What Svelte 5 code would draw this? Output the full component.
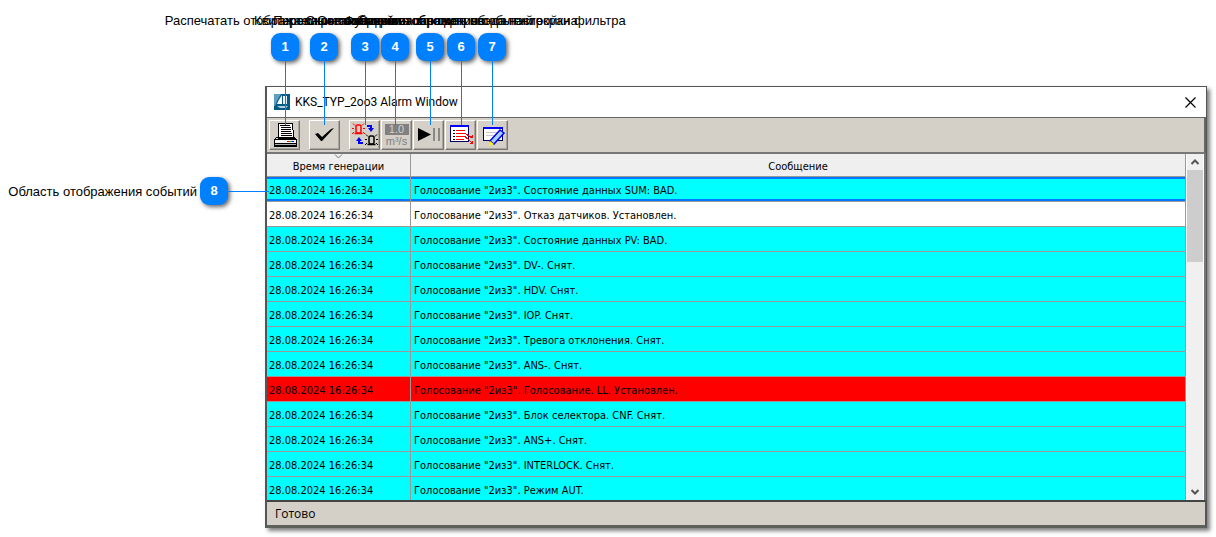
<script>
  const callouts = [
    { id: 1, x: 285, text: "Распечатать отображаемые сообщения" },
    { id: 2, x: 324, text: "Квитирование событий" },
    { id: 3, x: 365, text: "Переключение режима списка" },
    { id: 4, x: 395, text: "Скрыть значения параметров" },
    { id: 5, x: 430, text: "Остановить/возобновить обновление" },
    { id: 6, x: 461, text: "Функция отображения событий экрана" },
    { id: 7, x: 492, text: "Открыть окно для ввода настройки фильтра" },
  ];

  const time = "28.08.2024 16:26:34";

  const events = [
    { text: "Состояние данных SUM: BAD.", state: "selected" },
    { text: "Отказ датчиков. Установлен.", state: "plain" },
    { text: "Состояние данных PV: BAD." },
    { text: "DV-. Снят." },
    { text: "HDV. Снят." },
    { text: "IOP. Снят." },
    { text: "Тревога отклонения. Снят." },
    { text: "ANS-. Снят." },
    { text: "Голосование. LL. Установлен.", state: "alarm" },
    { text: "Блок селектора. CNF. Снят." },
    { text: "ANS+. Снят." },
    { text: "INTERLOCK. Снят." },
    { text: "Режим AUT." },
  ];
</script>

<main class="stage">
  <section class="window">
    <header class="titlebar">
      <svg class="logo" width="16" height="16" viewBox="0 0 16 16">
        <rect width="16" height="16" fill="#075985" />
        <path d="M0 0H7L3 7L1 12H0Z" fill="#5c9fc0" />
        <path d="M8 1V10H3C4 7 6 4 8 1Z" fill="#fff" />
        <path d="M9 2H13V10H9Z" fill="#e8f3f8" />
        <path d="M3 12H14L12 14H6Z" fill="#a9cfe0" />
      </svg>
      <h1>KKS_TYP_2oo3 Alarm Window</h1>
      <button class="close" aria-label="Закрыть">
        <svg width="11" height="11" viewBox="0 0 11 11">
          <path d="M0.5 0.5L10.5 10.5M10.5 0.5L0.5 10.5" stroke="#000" stroke-width="1.2" />
        </svg>
      </button>
    </header>

    <div class="toolbar">
      <button class="tool wide" aria-label="Печать">
        <svg width="29" height="28" viewBox="1 1 29 28" shape-rendering="crispEdges">
          <path d="M9 3H23L25 17H9Z" fill="#fff" stroke="#000" />
          <path d="M11 5.5H21M12 7.5H22M12 9.5H22M12 11.5H22M12 13.5H23M12 15.5H23" stroke="#000" />
          <path d="M8 17L5 20V25H27V20L25 17V18H9Z" fill="#ddd" stroke="#000" />
          <rect x="5.5" y="19.5" width="22" height="4" fill="#f4f4f4" stroke="#000" />
          <path d="M6 24H27V25H6Z" fill="#aaa" />
          <path d="M5 25.5H28" stroke="#000" stroke-width="2" />
          <path d="M18 21.5H20" stroke="red" />
          <path d="M20 21.5H23" stroke="#00b000" />
          <path d="M23 21.5H25" stroke="#00f" />
        </svg>
      </button>
      <button class="tool wide" aria-label="Квитировать">
        <svg width="29" height="28" viewBox="1 1 29 28">
          <path d="M6 14L9 13L13 17L22 9L25 8L13 21H12Z" fill="#000" />
        </svg>
      </button>
      <button class="tool" aria-label="Переключить">
        <svg width="29" height="28" viewBox="1 1 29 28">
          <g fill="none" stroke="red">
            <rect x="7" y="5" width="5" height="8" rx="1.5" stroke-width="1.5" />
            <path d="M5.5 13.5H13.5" stroke-width="1.5" />
            <path d="M4 3.5L6 5.5M15 3.5L13 5.5M3 8.5H5M14 8.5H16M3 14L5 12M16 14L14 12" />
          </g>
          <g fill="none" stroke="#000">
            <rect x="20" y="16" width="5" height="8" rx="1.5" stroke-width="1.5" />
            <path d="M18.5 24.5H26.5" stroke-width="1.5" />
            <path d="M17 14.5L19 16.5M28 14.5L26 16.5M16 19.5H18M27 19.5H29M16 25L18 23M29 25L27 23" />
          </g>
          <path d="M18 5H23V8H25L22 12L19 8H21V7H18Z" fill="#00f" />
          <path d="M14 24H9V21H7L10 17L13 21H11V22H14Z" fill="#00f" />
        </svg>
      </button>
      <button class="tool" aria-label="Единицы измерения">
        <span class="units"><b>1.0</b><i>m³/s</i></span>
      </button>
      <button class="tool" aria-label="Пауза">
        <svg width="29" height="28" viewBox="1 1 29 28">
          <path d="M5 8L18 14.5L5 21Z" fill="#000" />
          <path d="M20 8H22V21H20ZM25 8H27V21H25Z" fill="#888" />
        </svg>
      </button>
      <button class="tool" aria-label="Вывод событий">
        <svg width="29" height="28" viewBox="1 1 29 28" shape-rendering="crispEdges">
          <rect x="5.5" y="6.5" width="18" height="15" fill="#fff" stroke="#000060" />
          <path d="M5 6H24" stroke="#00f" stroke-width="2" />
          <path d="M8 10.5H10M8 13.5H10M8 16.5H10M8 19.5H10" stroke="#000" />
          <path d="M11 10.5H20M11 13.5H20L26 17M11 16.5H20L26 22M11 19.5H19" stroke="red" fill="none" />
          <path d="M28 14V18H24ZM28 20V24H24Z" fill="red" />
        </svg>
      </button>
      <button class="tool" aria-label="Фильтр">
        <svg width="29" height="28" viewBox="1 1 29 28">
          <rect x="6.5" y="7.5" width="19" height="13" fill="#fff" stroke="#000060" />
          <path d="M6 8H26" stroke="#00f" stroke-width="2" />
          <path d="M9 12.5H21M9 15.5H18" stroke="#c8c8c8" />
          <path d="M23 10L27 13L17 24L13 21Z" fill="#a8d4ff" stroke="#00f" stroke-width="1.5" />
          <path d="M13 21L17 24L12 26Z" fill="#ffef00" />
        </svg>
      </button>
    </div>

    <div class="list">
      <table>
        <thead>
          <tr>
            <th class="time">
              <svg class="sort" width="9" height="5" viewBox="0 0 9 5">
                <path d="M1 0.5L4.5 4L8 0.5" fill="none" stroke="#777" />
              </svg>
              Время генерации
            </th>
            <th>Сообщение</th>
          </tr>
        </thead>
        <tbody>
          {#each events as event}
            <tr class={event.state}>
              <td>{time}</td>
              <td>Голосование "2из3". {event.text}</td>
            </tr>
          {/each}
        </tbody>
      </table>
      <div class="scrollbar">
        <button aria-label="Вверх">
          <svg width="8" height="6" viewBox="0 0 8 6">
            <path d="M0.5 5L4 1.5L7.5 5" fill="none" stroke="#555" stroke-width="2" />
          </svg>
        </button>
        <div class="thumb"></div>
        <button class="down" aria-label="Вниз">
          <svg width="8" height="6" viewBox="0 0 8 6">
            <path d="M0.5 1L4 4.5L7.5 1" fill="none" stroke="#555" stroke-width="2" />
          </svg>
        </button>
      </div>
    </div>

    <footer>Готово</footer>
  </section>

  <!-- numbered callouts pinned over the window -->
  {#each callouts as callout}
    <div class="callout" style="left: {callout.x}px">
      <span class="caption">{callout.text}</span>
      <span class="badge">{callout.id}</span>
      <span class="leader"></span>
    </div>
  {/each}

  <div class="callout-left">
    <span class="caption">Область отображения событий</span>
    <span class="badge">8</span>
    <span class="leader"></span>
  </div>
</main>

<style>
  :global(body) {
    margin: 0;
    background: #fff;
  }

  .stage {
    position: relative;
    padding: 86px 9px 9px 265px;
    color: #000;
    font-family: "Liberation Sans", Arial, sans-serif;
  }

  button {
    font: inherit;
    color: inherit;
  }

  .window {
    border: 1px solid #555;
    border-width: 1px 1px 3px 2px;
    border-bottom-color: #5c615c;
    background: #d4d0c8;
    box-shadow: 3px 3px 4px rgba(0, 0, 0, 0.5);
  }

  .titlebar {
    display: flex;
    align-items: center;
    height: 30px;
    padding: 0 10px 0 7px;
    background: #fff;
    border-bottom: 1px solid #666;
  }

  h1 {
    flex: 1;
    margin: 0 0 0 5px;
    font: 12px Roboto, sans-serif;
  }

  .close {
    display: flex;
    padding: 0;
    border: none;
    background: none;
  }

  .toolbar {
    display: flex;
    gap: 1px;
    padding: 2px;
    border-right: 2px solid #666;
    border-bottom: 2px solid #777;
  }

  .tool {
    display: flex;
    box-sizing: border-box;
    width: 31px;
    height: 30px;
    padding: 0;
    border: 1px solid;
    border-color: #fff #777 #777 #fff;
    background: #d4d0c8;
    box-shadow: inset -1px -1px #aaa69f;
  }

  .wide {
    margin-right: 8px;
  }

  .units {
    display: flex;
    flex-direction: column;
    align-items: center;
    width: 29px;
    padding-top: 3px;
    font: 11px/12px "Liberation Sans", sans-serif;
    color: #808080;
  }

  .units b {
    width: 24px;
    height: 11px;
    font-weight: normal;
    line-height: 11px;
    background: #808080;
    color: #d4d0c8;
  }

  .units i {
    font-style: normal;
  }

  .list {
    display: flex;
    height: 346px;
    overflow: hidden;
    background: #efefef;
    border-right: 2px solid #777;
  }

  table {
    flex: 1;
    align-self: flex-start;
    table-layout: fixed;
    border-collapse: separate;
    border-spacing: 0;
    font: 11px "DejaVu Sans Condensed", "DejaVu Sans", sans-serif;
  }

  th {
    position: relative;
    box-sizing: border-box;
    height: 23px;
    padding: 2px 0 0;
    font-weight: normal;
    background: #efefef;
    border-right: 1px solid #999;
    border-bottom: 1px solid #999;
  }

  .time {
    width: 144px;
  }

  .sort {
    position: absolute;
    top: 0;
    left: 67px;
  }

  td {
    box-sizing: border-box;
    height: 25px;
    padding: 2px 2px 0;
    background: #0ff;
    border-right: 1px solid #999;
    border-bottom: 1px solid #999;
    white-space: nowrap;
  }

  td + td {
    padding-left: 3px;
  }

  .selected td {
    box-shadow: inset 0 2px #0078ff, inset 0 -2px #0078ff;
  }

  .plain td {
    background: #fff;
  }

  .alarm td {
    background: #f00;
  }

  .scrollbar {
    display: flex;
    flex-direction: column;
    width: 16px;
    border: solid #fff;
    border-width: 0 1px;
    background: #f0f0f0;
  }

  .scrollbar button {
    display: flex;
    align-items: center;
    justify-content: center;
    height: 16px;
    padding: 0;
    border: none;
    background: none;
  }

  .scrollbar .down {
    margin-top: auto;
  }

  .thumb {
    height: 92px;
    background: #cdcdcd;
  }

  footer {
    padding: 0 8px;
    font: 12px/23px "Open Sans", sans-serif;
    border-top: 2px solid #444;
    border-right: 1px solid #555;
  }

  .callout {
    position: absolute;
    top: 13px;
    display: flex;
    flex-direction: column;
    align-items: center;
    width: 0;
    pointer-events: none;
  }

  .callout-left {
    position: absolute;
    top: 177px;
    left: 0;
    display: flex;
    align-items: center;
    justify-content: flex-end;
    width: 269px;
    pointer-events: none;
  }

  .caption {
    font-size: 13px;
    line-height: 15px;
    white-space: nowrap;
  }

  .badge {
    flex: none;
    width: 28px;
    height: 28px;
    border-radius: 9px;
    background: #0080ff;
    box-shadow: 2px 2px 4px rgba(0, 0, 0, 0.6);
    color: #fff;
    font-size: 13px;
    font-weight: bold;
    line-height: 28px;
    text-align: center;
  }

  .callout .badge {
    margin-top: 5px;
  }

  .callout-left .badge {
    margin-left: 3px;
  }

  .leader {
    flex: none;
    width: 1px;
    height: 64px;
    background: #0080ff;
  }

  .callout-left .leader {
    width: 41px;
    height: 1px;
  }
</style>
